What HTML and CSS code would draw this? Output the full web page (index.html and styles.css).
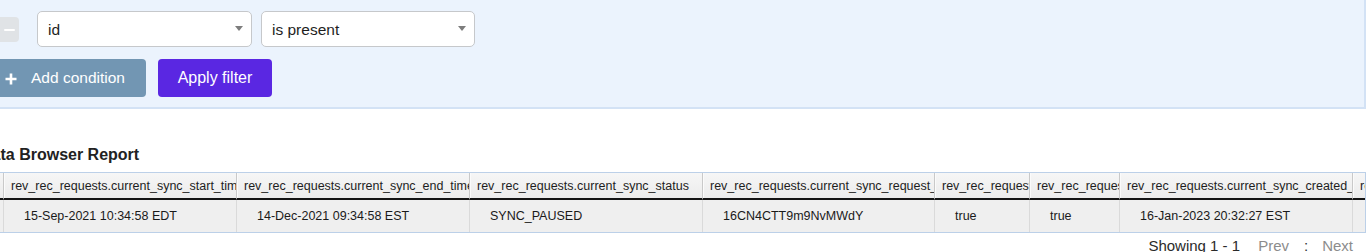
FILE: index.html
```html
<!DOCTYPE html>
<html>
<head>
<meta charset="utf-8">
<link rel="stylesheet" href="styles.css">
</head>
<body>
<div class="page">
  <div class="filter">
    <div class="cond-row">
      <button class="btn-remove" type="button"><span class="dash"></span></button>
      <div class="select"><span>id</span><span class="caret"></span></div>
      <div class="select"><span>is present</span><span class="caret"></span></div>
    </div>
    <div class="actions">
      <button class="btn-add" type="button">
        <svg class="plus" width="12" height="12" viewBox="0 0 12 12"><path d="M6 0.5V11.5M0.5 6H11.5" stroke="#fff" stroke-width="2.6" fill="none"/></svg>
        <span>Add condition</span>
      </button>
      <button class="btn-apply" type="button">Apply filter</button>
    </div>
  </div>

  <h2 class="report-title">Data Browser Report</h2>

  <div class="grid">
    <table class="grid-table">
      <colgroup>
        <col class="c-idx">
        <col class="c-wide">
        <col class="c-wide">
        <col class="c-wide">
        <col class="c-wide2">
        <col class="c-n1">
        <col class="c-n2">
        <col class="c-wide">
        <col class="c-wide">
      </colgroup>
      <thead>
        <tr>
          <th></th>
          <th>rev_rec_requests.current_sync_start_time</th>
          <th>rev_rec_requests.current_sync_end_time</th>
          <th>rev_rec_requests.current_sync_status</th>
          <th>rev_rec_requests.current_sync_request_id</th>
          <th>rev_rec_requests.is_active</th>
          <th>rev_rec_requests.is_latest</th>
          <th>rev_rec_requests.current_sync_created_at</th>
          <th>rev_rec_requests.current_sync_updated_at</th>
        </tr>
      </thead>
      <tbody>
        <tr>
          <td></td>
          <td>15-Sep-2021 10:34:58 EDT</td>
          <td>14-Dec-2021 09:34:58 EST</td>
          <td>SYNC_PAUSED</td>
          <td>16CN4CTT9m9NvMWdY</td>
          <td>true</td>
          <td>true</td>
          <td>16-Jan-2023 20:32:27 EST</td>
          <td></td>
        </tr>
      </tbody>
    </table>
  </div>

  <div class="pager">
    <span class="showing">Showing 1 - 1</span>
    <span class="prev">Prev</span>
    <span class="sep">:</span>
    <span class="next">Next</span>
  </div>
</div>
</body>
</html>
```

FILE: styles.css
```css
html, body {
  margin: 0;
  padding: 0;
  background: #ffffff;
}

body {
  font-family: "Liberation Sans", Arial, sans-serif;
  color: #222;
  overflow: hidden;
}

.page {
  margin-left: -20px;
  margin-right: 4px;
}

/* Filter panel */
.filter {
  background: #ebf3fd;
  border-right: 2px solid #d3e2f5;
  border-bottom: 2px solid #d3e2f5;
  padding: 11px 0 10px 15px;
}

.cond-row {
  display: flex;
  align-items: center;
  height: 36px;
}

.btn-remove {
  width: 24px;
  height: 25px;
  margin: 1px 18px 0 0;
  padding: 0;
  border: none;
  border-radius: 4px;
  background: #e0e3e6;
  display: flex;
  align-items: center;
  justify-content: center;
}

.dash {
  display: block;
  width: 11px;
  height: 2px;
  margin-left: 5px;
  background: #fff;
  border-radius: 1px;
}

.select {
  box-sizing: border-box;
  width: 215px;
  height: 36px;
  margin-right: 9px;
  background: #fff;
  border: 1px solid #c6c8cb;
  border-radius: 5px;
  display: flex;
  align-items: center;
  justify-content: space-between;
  padding: 1px 8px 0 10px;
  font-size: 15.5px;
  color: #1e1e1e;
}

.select + .select {
  width: 214px;
}

.caret {
  width: 0;
  height: 0;
  margin-top: -3px;
  border-left: 4px solid transparent;
  border-right: 4px solid transparent;
  border-top: 5px solid #7d7d7d;
}

.actions {
  display: flex;
  gap: 12px;
  margin-top: 12px;
}

.btn-add,
.btn-apply {
  height: 38px;
  border: none;
  border-radius: 4px;
  color: #fff;
  font-family: "Liberation Sans", Arial, sans-serif;
  font-size: 15.5px;
  display: flex;
  align-items: center;
  padding: 0;
}

.btn-add {
  width: 151px;
  background: #7296b3;
  padding-left: 10px;
}

.plus {
  margin-right: 14px;
  margin-top: 1px;
}

.btn-apply {
  width: 114px;
  justify-content: center;
  background: #5a27e2;
  font-size: 16px;
}

/* Title */
.report-title {
  margin: 37px 0 8px;
  font-size: 16px;
  line-height: 18px;
  font-weight: bold;
  color: #222;
}

/* Grid */
.grid {
  overflow: hidden;
  border-top: 1px solid #bcd0e8;
  border-bottom: 1px solid #bcd0e8;
  border-right: 1px solid #bcd0e8;
}

.grid-table {
  table-layout: fixed;
  border-collapse: separate;
  border-spacing: 0;
  width: 1606px;
}

.c-idx { width: 24px; }
.c-wide { width: 233px; }
.c-wide2 { width: 232px; }
.c-n1 { width: 95px; }
.c-n2 { width: 90px; }

.grid-table th {
  box-sizing: border-box;
  height: 27px;
  padding: 0 0 0 7px;
  text-align: left;
  font-weight: normal;
  font-size: 12.5px;
  color: #1e1e1e;
  white-space: nowrap;
  overflow: hidden;
  background: linear-gradient(#f6f6f6, #ececec);
  border-right: 1px solid #c9c9c9;
  border-bottom: 2px solid #141414;
  box-shadow: inset 1px 0 0 #fbfbfb;
}

.grid-table td {
  box-sizing: border-box;
  height: 32px;
  padding: 0 0 0 20px;
  font-size: 12.5px;
  color: #1a1a1a;
  white-space: nowrap;
  overflow: hidden;
  background: #efefef;
  border-right: 1px solid #dadada;
}

/* Pager */
.pager {
  display: flex;
  justify-content: flex-end;
  margin-top: 4px;
  padding-right: 13px;
  font-size: 15px;
  line-height: 17px;
}

.showing {
  color: #2a2a2a;
}

.prev {
  margin-left: 18px;
  color: #8c8c8c;
}

.sep {
  margin-left: 15px;
  color: #333;
}

.next {
  margin-left: 14px;
  color: #8c8c8c;
}
```
